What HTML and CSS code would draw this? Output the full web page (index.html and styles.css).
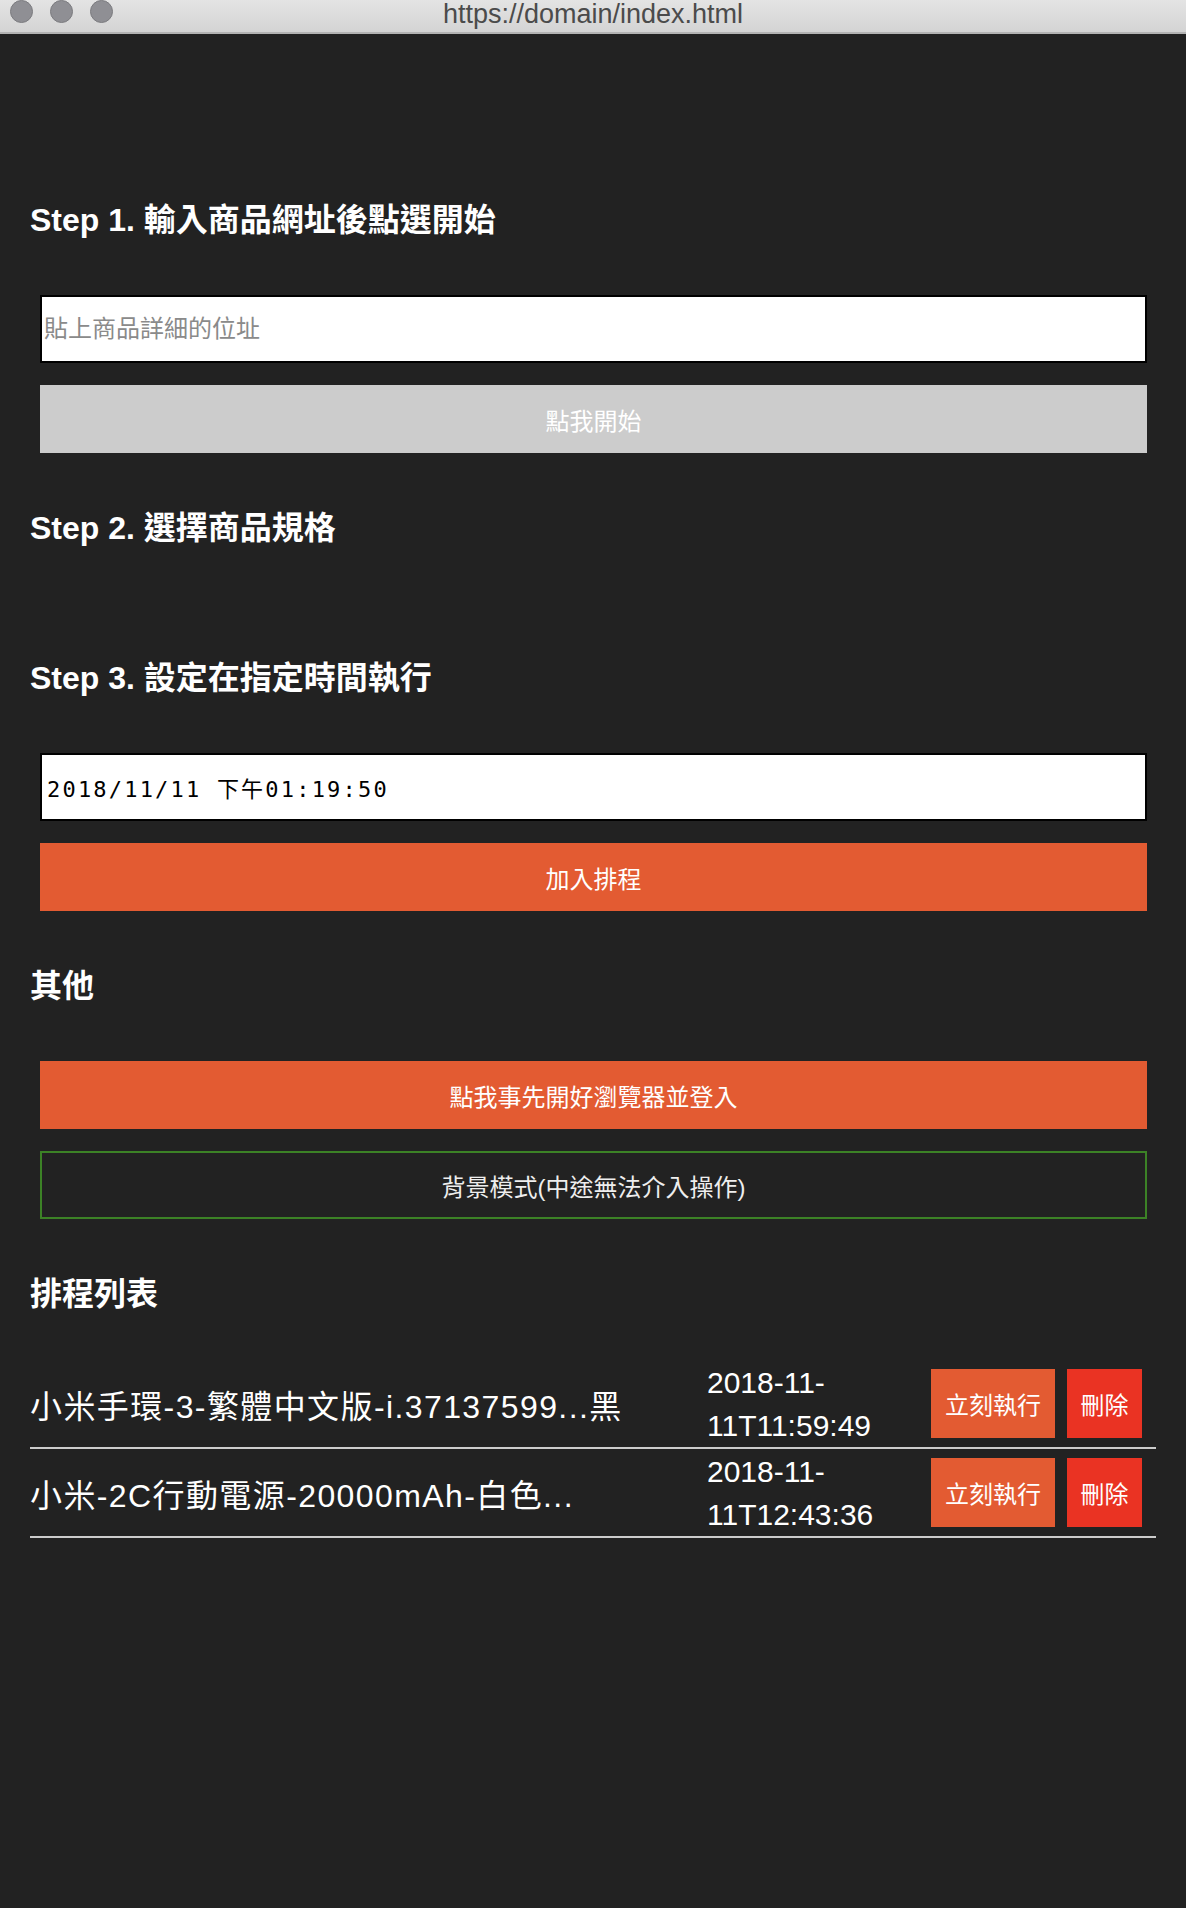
FILE: index.html
```html
<!DOCTYPE html>
<html lang="zh-Hant">
  <head>
    <meta charset="UTF-8" />
    <title>https://domain/index.html</title>
    <link rel="stylesheet" href="styles.css">
  </head>
  <body>

    <!-- Window title bar -->
    <div class="titlebar">
      <div class="lights">
        <span class="light"></span>
        <span class="light"></span>
        <span class="light"></span>
      </div>
      <div class="title">https://domain/index.html</div>
      <div></div>
    </div>

    <div class="page">
      <!-- Step 1 -->
      <div class="section">
        <h2 class="step-title">Step 1. 輸入商品網址後點選開始</h2>
        <input class="field url-input" type="text" placeholder="貼上商品詳細的位址" />
        <button class="field btn btn-disabled">點我開始</button>
      </div>

      <!-- Step 2 -->
      <div class="section">
        <h2 class="step-title">Step 2. 選擇商品規格</h2>
        <div class="spec-list"></div>
      </div>

      <!-- Step 3 -->
      <div class="section">
        <h2 class="step-title">Step 3. 設定在指定時間執行</h2>
        <input class="field date-input" type="text" value="2018/11/11 下午01:19:50" />
        <button class="field btn btn-orange">加入排程</button>
      </div>

      <!-- Others -->
      <div class="section">
        <h2 class="step-title">其他</h2>
        <button class="field btn btn-orange">點我事先開好瀏覽器並登入</button>
        <button class="field btn btn-outline">背景模式(中途無法介入操作)</button>
      </div>

      <!-- Schedule list -->
      <div class="section">
        <h2 class="step-title">排程列表</h2>
        <div class="schedule">
          <div class="row">
            <div class="name">小米手環-3-繁體中文版-i.37137599...黑</div>
            <div class="time">2018-11-<wbr>11T11:59:49</div>
            <div class="actions">
              <button class="btn-small run">立刻執行</button>
              <button class="btn-small del">刪除</button>
            </div>
          </div>
          <div class="row">
            <div class="name">小米-2C行動電源-20000mAh-白色...</div>
            <div class="time">2018-11-<wbr>11T12:43:36</div>
            <div class="actions">
              <button class="btn-small run">立刻執行</button>
              <button class="btn-small del">刪除</button>
            </div>
          </div>
        </div>
      </div>
    </div>

  </body>
</html>
```

FILE: styles.css
```css
* {
  box-sizing: border-box;
}

body {
  margin: 0;
  font-family: 'Liberation Sans', 'Noto Sans CJK TC', sans-serif;
  background-color: #222222;
  color: #ffffff;
  min-height: 100vh;
}

.titlebar {
  height: 34px;
  background: linear-gradient(#e4e4e4, #d4d4d4);
  border-bottom: 2px solid #b3b3b3;
  display: grid;
  grid-template-columns: 1fr auto 1fr;
  align-items: start;
}

.lights {
  display: flex;
  gap: 17px;
  padding-left: 10px;
}

.light {
  width: 23px;
  height: 23px;
  border-radius: 50%;
  background-color: #8f8f94;
  border: 1px solid #7b7b7f;
}

.title {
  font-size: 27px;
  line-height: 28px;
  color: #4b4b4b;
}

.page {
  padding: 166px 30px 0;
}

.section {
  display: flex;
  flex-direction: column;
  margin-bottom: 55px;
}

.step-title {
  margin: 0 0 55px;
  font-size: 32px;
  line-height: 40px;
  font-weight: bold;
}

.field {
  display: block;
  width: 1107px;
  height: 68px;
  margin: 0 0 22px 10px;
  font-family: 'Liberation Sans', 'Noto Sans CJK TC', sans-serif;
  font-size: 24px;
}

.field:last-child {
  margin-bottom: 0;
}

.url-input,
.date-input {
  border: 2px solid #000000;
  background: #ffffff;
  padding: 0 2px;
  color: #000000;
  outline: none;
}

.url-input::placeholder {
  color: #8a8a8a;
}

.date-input {
  font-family: 'DejaVu Sans Mono', 'Noto Sans CJK TC', monospace;
  font-size: 22px;
  letter-spacing: 2.2px;
  padding-left: 5px;
}

.btn {
  border: none;
  color: #ffffff;
  cursor: pointer;
}

.btn-disabled {
  background-color: #cccccc;
}

.btn-orange {
  background-color: #e35b32;
}

.btn-outline {
  background: transparent;
  border: 2px solid #3c8226;
  color: #eeeeee;
}

.schedule {
  margin-top: -9px;
}

.row {
  display: flex;
  align-items: center;
  min-height: 89px;
  border-bottom: 2px solid #cccccc;
  padding-right: 14px;
}

.name {
  flex: 1;
  font-size: 32px;
  letter-spacing: 1.4px;
}

.time {
  width: 224px;
  font-size: 30px;
  line-height: 43px;
}

.actions {
  display: flex;
  gap: 12px;
}

.btn-small {
  height: 69px;
  border: none;
  color: #ffffff;
  font-family: 'Liberation Sans', 'Noto Sans CJK TC', sans-serif;
  font-size: 24px;
  cursor: pointer;
}

.btn-small.run {
  width: 124px;
  background-color: #e35b32;
}

.btn-small.del {
  width: 75px;
  background-color: #ea3323;
}
```
